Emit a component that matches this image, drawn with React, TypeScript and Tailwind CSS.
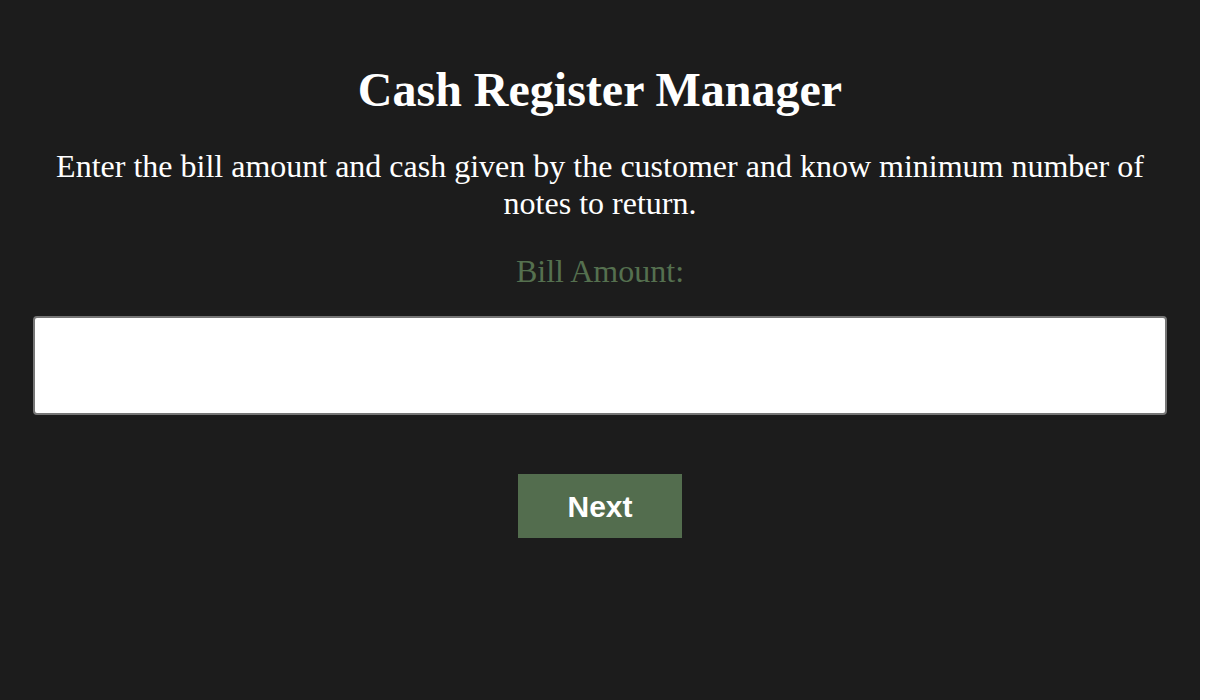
// Cash register — single-step form, bill amount entry.
const SERIF = "font-['Liberation_Serif','Times_New_Roman',serif]";

export default function App() {
  return (
    <div className={"w-[1200px] min-h-[700px] bg-[#1c1c1c] text-white text-center " + SERIF}>
      <div className="px-[33px] pt-[60px]">
        <h1 className="text-[48px] font-bold leading-[60px]">Cash Register Manager</h1>
        <p className="mt-[28px] text-[32px] leading-[37px] px-[20px]">
          Enter the bill amount and cash given by the customer and know minimum number of notes to return.
        </p>
        <label htmlFor="bill" className="block mt-[31px] text-[32px] leading-[37px] text-[#55704f]">
          Bill Amount:
        </label>
        <input
          id="bill"
          type="number"
          className="block mt-[26px] w-full h-[99px] bg-white border-2 border-[#767676] rounded-[4px] text-black text-[32px] px-3 outline-none"
        />
        <button className="mt-[59px] w-[164px] h-[64px] bg-[#536d4e] text-white font-bold text-[30px] font-['Liberation_Sans',Arial,sans-serif]">
          Next
        </button>
      </div>
    </div>
  );
}
